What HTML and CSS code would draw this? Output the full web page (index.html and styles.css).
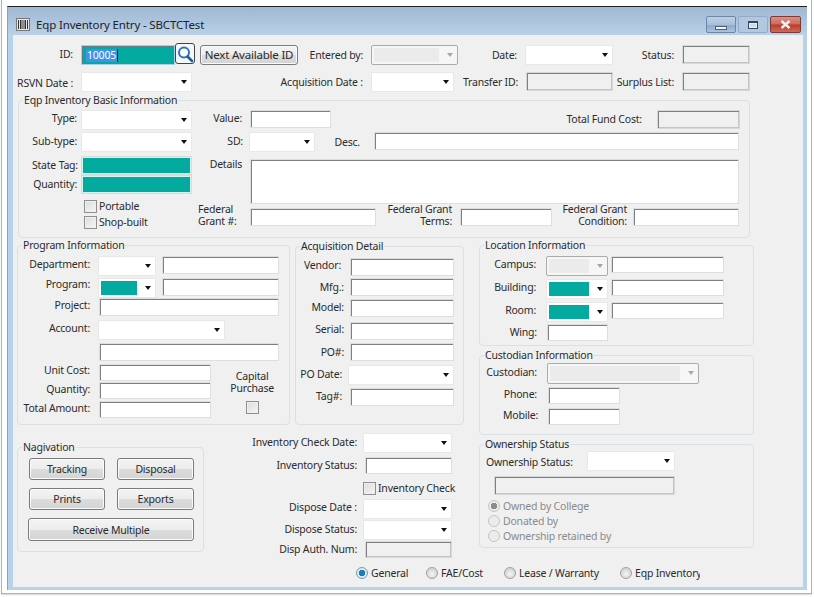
FILE: index.html
```html
<!DOCTYPE html>
<html lang="en">
<head>
<meta charset="utf-8">
<title>Eqp Inventory Entry - SBCTCTest</title>
<link rel="stylesheet" href="styles.css">
</head>
<body>
<div class="sheet">
<div class="window">
  <header class="titlebar">
    <svg class="app-icon" width="14" height="13" viewBox="0 0 14 13"><rect x=".5" y=".5" width="13" height="12" fill="#e8e8e8" stroke="#777"/><path d="M2.5 2v9M4.5 2v9M6 2v9M8 2v9M9.5 2v9M11.5 2v9" stroke="#333" fill="none"/></svg>
    <span class="title">Eqp Inventory Entry - SBCTCTest</span>
    <div class="winbtn min"><i></i></div>
    <div class="winbtn max"><i></i></div>
    <div class="winbtn close"><svg width="13" height="9" viewBox="0 0 13 9"><path d="M2.5 1l8 7M10.5 1l-8 7" stroke="#f4f0ee" stroke-width="2.4" fill="none"/></svg></div>
  </header>
  <main class="content">
    <div class="top t-row1">
      <label class="lbl up1">ID:</label>
      <div class="in id-in"><span class="sel">10005</span></div>
      <button class="search"><svg width="18" height="18" viewBox="0 0 18 18"><circle cx="8" cy="7.5" r="5" fill="#fff" stroke="#2a78b8" stroke-width="2"/><path d="M11.5 11.5l4.5 4.5" stroke="#1f5f99" stroke-width="2.6" stroke-linecap="round"/></svg></button>
      <button class="btn next">Next Available ID</button>
      <label class="lbl">Entered by:</label>
      <div class="combo off"><b></b></div>
      <label class="lbl">Date:</label>
      <div class="combo"></div>
      <label class="lbl">Status:</label>
      <div class="in ro"></div>
    </div>
    <div class="top t-row2">
      <label class="lbl dn1">RSVN Date :</label>
      <div class="combo"></div>
      <label class="lbl">Acquisition Date :</label>
      <div class="combo"></div>
      <label class="lbl">Transfer ID:</label>
      <div class="in ro"></div>
      <label class="lbl">Surplus List:</label>
      <div class="in ro"></div>
    </div>

    <fieldset class="group basic">
      <legend>Eqp Inventory Basic Information</legend>
      <div class="basic-left">
        <label class="lbl p4 h16">Type:</label><div class="combo"></div>
        <label class="lbl p4 h18">Sub-type:</label><div class="combo"></div>
        <label class="lbl p3 h18">State Tag:</label><div class="in teal-in"></div>
        <label class="lbl p4 h18">Quantity:</label><div class="in teal-in"></div>
        <label class="check c2"><span class="box"></span>Portable</label>
        <label class="check c2"><span class="box"></span>Shop-built</label>
      </div>
      <div class="basic-right">
        <div class="r-a">
          <label class="lbl h16">Value:</label><div class="in"></div>
          <label class="lbl p15">Total Fund Cost:</label><div class="in ro"></div>
        </div>
        <div class="r-b">
          <label class="lbl p6 h18">SD:</label><div class="combo"></div>
          <label class="lbl p14">Desc.</label><div class="in"></div>
        </div>
        <div class="r-c">
          <label class="lbl top-lbl">Details</label><div class="in area"></div>
        </div>
        <div class="r-d">
          <label class="lbl two left">Federal<br>Grant #:</label><div class="in"></div>
          <label class="lbl two">Federal Grant<br>Terms:</label><div class="in"></div>
          <label class="lbl two p6">Federal Grant<br>Condition:</label><div class="in"></div>
        </div>
      </div>
    </fieldset>

    <div class="lower">
      <div class="lower-left">
        <div class="lower-top">
          <fieldset class="group program">
            <legend>Program Information</legend>
            <div class="t-dept"><label class="lbl h16">Department:</label><div class="combo"></div><div class="in ml6"></div></div>
            <div class="t-dept t-prog"><label class="lbl h12">Program:</label><div class="combo teal"><b></b></div><div class="in ml6"></div></div>
            <div class="t-project"><label class="lbl h14">Project:</label><div class="in ml1"></div></div>
            <div class="t-account"><label class="lbl h16">Account:</label><div class="combo"></div></div>
            <div class="t-project t-blank"><span></span><div class="in ml1"></div></div>
            <div class="cost">
              <div class="cost-fields">
                <label class="lbl h12">Unit Cost:</label><div class="in ml1"></div>
                <label class="lbl h14">Quantity:</label><div class="in ml1"></div>
                <label class="lbl h14">Total Amount:</label><div class="in ml1"></div>
              </div>
              <div class="capital">
                <span>Capital<br>Purchase</span>
                <span class="box"></span>
              </div>
            </div>
          </fieldset>
          <fieldset class="group acq">
            <legend>Acquisition Detail</legend>
            <label class="lbl p9 h14">Vendor:</label><div class="in"></div>
            <label class="lbl p6">Mfg.:</label><div class="in"></div>
            <label class="lbl p6 h16">Model:</label><div class="in"></div>
            <label class="lbl p6 h14">Serial:</label><div class="in"></div>
            <label class="lbl p6">PO#:</label><div class="in"></div>
            <label class="lbl p8">PO Date:</label><div class="combo mln2"></div>
            <label class="lbl p8 h16">Tag#:</label><div class="in"></div>
          </fieldset>
        </div>
        <div class="lower-bottom">
          <fieldset class="group nav">
            <legend>Nagivation</legend>
            <button class="btn">Tracking</button>
            <button class="btn">Disposal</button>
            <button class="btn">Prints</button>
            <button class="btn">Exports</button>
            <button class="btn receive">Receive Multiple</button>
          </fieldset>
          <div class="inventory">
            <label class="lbl p6">Inventory Check Date:</label><div class="combo w89"></div>
            <label class="lbl p6 h16">Inventory Status:</label><div class="in w87 ml2"></div>
            <span></span><label class="check"><span class="box"></span>Inventory Check</label>
            <label class="lbl p6 h16">Dispose Date :</label><div class="combo w89"></div>
            <label class="lbl p6">Dispose Status:</label><div class="combo w89"></div>
            <label class="lbl p6 h16">Disp Auth. Num:</label><div class="in ro w87 ml2"></div>
          </div>
        </div>
      </div>
      <div class="lower-right">
        <fieldset class="group location">
          <legend>Location Information</legend>
          <label class="lbl p10 h16">Campus:</label><div class="combo off"><b></b></div><div class="in ml3"></div>
          <label class="lbl p10 h16">Building:</label><div class="combo teal"><b></b></div><div class="in ml3"></div>
          <label class="lbl p10 h16">Room:</label><div class="combo teal"><b></b></div><div class="in ml3"></div>
          <label class="lbl p9 h16">Wing:</label><div class="in ml1"></div>
        </fieldset>
        <fieldset class="group custodian">
          <legend>Custodian Information</legend>
          <label class="lbl p10 h18">Custodian:</label><div class="combo off"><b></b></div>
          <label class="lbl p10 h14">Phone:</label><div class="in ml1 w72"></div>
          <label class="lbl p9 h14">Mobile:</label><div class="in ml1 w72"></div>
        </fieldset>
        <fieldset class="group ownership">
          <legend>Ownership Status</legend>
          <div class="own-head"><label class="lbl own-lbl">Ownership Status:</label><div class="combo"></div></div>
          <div class="in ro own-in"></div>
          <label class="radio dim"><span class="dot on"></span>Owned by College</label>
          <label class="radio dim"><span class="dot"></span>Donated by</label>
          <label class="radio dim"><span class="dot"></span>Ownership retained by</label>
        </fieldset>
      </div>
    </div>

    <nav class="tabs">
      <label class="radio"><span class="dot active"></span>General</label>
      <label class="radio"><span class="dot"></span>FAE/Cost</label>
      <label class="radio"><span class="dot"></span>Lease / Warranty</label>
      <label class="radio"><span class="dot"></span>Eqp Inventory</label>
    </nav>
  </main>
</div>
</div>
</body>
</html>
```
FILE: styles.css
```css
* { box-sizing: border-box; }
html, body { margin: 0; padding: 0; background: #fff; }
body { width: 814px; height: 597px; overflow: hidden; font: 10.5px/14px "Noto Sans", sans-serif; letter-spacing: -.2px; color: #2b2b2b; }
.sheet { margin-left: 1px; width: 811px; height: 594px; padding: 6px 4px 0 5px; border: solid #b4b4b4; border-width: 0 1px 1px 1px; box-shadow: 0 1px 1px #ddd; }
.window { width: 800px; height: 584px; background: #b9d2ec; border-top: 1px solid #222; border-left: 1px solid #a0a0a0; padding: 0 4px 3px 5px; display: flex; flex-direction: column; }

.titlebar { height: 28px; margin: 0 -4px 0 -5px; padding: 0 5px 0 8px; display: flex; align-items: flex-start; background: linear-gradient(#9fb7d3, #bad1e8); }
.app-icon { margin-top: 11px; flex: none; }
.title { margin: 9px auto 0 6px; font-size: 11.5px; letter-spacing: -.15px; line-height: 17px; color: #222; }
.winbtn { height: 17px; margin-top: 9px; border: 1px solid #6f87a3; border-radius: 2px; display: flex; align-items: center; justify-content: center; background: linear-gradient(#bcd0e6 0, #a9c0da 50%, #8da8c8 51%, #a9c4e0 100%); }
.winbtn.min { width: 30px; }
.winbtn.min i { width: 12px; height: 4px; margin-top: 6px; background: #eef3f8; border: 1px solid #4b5f78; }
.winbtn.max { width: 30px; margin-left: 2px; background: #b1c8e0; border-color: #94abc6; }
.winbtn.max i { width: 10px; height: 8px; border: 1px solid #39475a; border-top-width: 2px; background: #cfdcea; box-shadow: inset 0 0 0 1px #e6edf5; }
.winbtn.close { width: 31px; margin: 9px 1px 0 2px; border-color: #7d3a35; background: linear-gradient(#d99085 0, #cc6a5d 48%, #b83a2c 52%, #d16a58 100%); }

.content { flex: 1; background: #f0f0f0; padding-top: 10px; }

.lbl { display: block; text-align: right; padding-right: 8px; white-space: nowrap; line-height: 20px; }
.h12.lbl { line-height: 12px; } .h14.lbl { line-height: 14px; } .h16.lbl { line-height: 16px; } .h18.lbl { line-height: 18px; }
.up1.lbl { line-height: 18px; } .dn1.lbl { line-height: 22px; }
.p3 { padding-right: 3px; } .p4 { padding-right: 4px; } .p6 { padding-right: 6px; }
.p8 { padding-right: 8px; } .p9 { padding-right: 9px; } .p10 { padding-right: 10px; }
.p14 { padding-right: 14px; } .p15 { padding-right: 15px; }
.ml1 { margin-left: 1px; } .ml2 { margin-left: 2px; } .ml3 { margin-left: 3px; } .ml6 { margin-left: 6px; }
.mln2 { margin-left: -2px; }
.w72 { width: 72px; } .w87 { width: 87px; } .w89 { width: 89px; }

.in { height: 18px; background: #fff; border: 1px solid #dedede; box-shadow: inset 1px 1px 0 #808080; }
.in.ro { background: #f0f0f0; box-shadow: inset 1px 1px 0 #808080, inset -1px -1px 0 #c4c4c4; border-color: #d8d8d8; height: 19px; }
.in.area { height: 45px; }
.in.teal-in { height: 19px; background: #03aaa0; border: 1px solid #dadada; box-shadow: inset 0 0 0 1px #d8f0ee; }
.id-in { height: 20px; background: #03aaa0; border: 1px solid #a9cfe8; box-shadow: inset 1px 1px 0 #5d7f8a; padding: 3px 0 0 4px; line-height: 13px; color: #fff; }
.sel { display: inline-block; background: #3f93ea; padding: 0 1px; border-right: 1px solid #222; }

.combo { position: relative; height: 20px; background: #fff; border: 1px solid #e8e8e8; border-radius: 1px; }
.combo::after { content: ""; position: absolute; right: 4px; top: 7px; border: solid transparent; border-width: 4px 3.5px 0; border-top-color: #111; }
.combo b { display: block; position: absolute; left: 2px; top: 2px; bottom: 2px; right: 18px; }
.combo.teal b { background: #03aaa0; }
.combo.off { border-color: #ababab; border-radius: 2px; background: #f6f6f6; }
.combo.off b { background: #ebebeb; }
.combo.off::after { border-top-color: #a8a8a8; }

button { font: inherit; letter-spacing: inherit; color: inherit; padding: 0; }
.btn { height: 22px; border: 1px solid #7b7b7b; border-radius: 3px; background: linear-gradient(#f4f4f4 0, #ececec 50%, #dcdcdc 51%, #d4d4d4 100%); box-shadow: inset 0 0 0 1px #fbfbfb; white-space: nowrap; }
.next { height: 20px; width: 98px; font-size: 11.5px; line-height: 16px; }
.search { width: 20px; height: 21px; margin-top: -2px; border: 1px solid #444; border-radius: 3px; background: #f4f7fb; display: flex; align-items: center; justify-content: center; }

.top { display: grid; height: 20px; }
.t-row1 { grid-template-columns: 68px 94px 25px 98px 73px 87px 67px 88px 69px 68px; }
.t-row2 { margin-top: 7px; grid-template-columns: 68px 111px 179px 83px 72px 87px 69px 68px; }

fieldset { margin: 0; padding: 0; min-width: 0; }
.group { border: 1px solid #dbe0e4; border-radius: 4px; }
legend { margin-left: 4px; padding: 0 1px; line-height: 14px; white-space: nowrap; }

.basic { margin: 1px 0 0 5px; width: 732px; height: 145px; display: flex; padding-top: 3px; }
.basic-left { width: 173px; display: grid; grid-template-columns: 62px 111px; grid-template-rows: 22px 24px 19px 24px 16px 16px; }
.basic-right { width: 548px; display: grid; grid-template-rows: 22px 27px 49px 18px; }
.r-a { display: grid; grid-template-columns: 58px 81px 326px 83px; }
.r-b { display: grid; grid-template-columns: 57px 66px 59px 365px; }
.r-c { display: grid; grid-template-columns: 58px 489px; }
.r-d { display: grid; grid-template-columns: 58px 126px 84px 92px 81px 106px; }
.r-a .lbl:not(.h16) { line-height: 18px; }
.lbl.top-lbl { line-height: 10px; }
.lbl.two { line-height: 12px; margin-top: -5px; height: 24px; }
.lbl.two.left { text-align: left; padding-left: 6px; }

.check { display: flex; align-items: center; white-space: nowrap; height: 14px; }
.c2 { grid-column: 2; padding-left: 3px; }
.box { width: 13px; height: 13px; border: 1px solid #8f8f8f; background: linear-gradient(135deg, #dcdcdc, #f6f6f6); box-shadow: inset 0 0 0 1px #efefef; margin-right: 2px; flex: none; }

.lower { display: flex; }
.lower-left { margin-left: 4px; width: 447px; }
.lower-top { display: flex; gap: 5px; }
.program { width: 273px; height: 187px; padding-top: 4px; }
.t-dept { display: grid; grid-template-columns: 80px 58px 123px; height: 22px; }
.t-prog { height: 20px; }
.t-project { display: grid; grid-template-columns: 80px 181px; height: 22px; }
.t-blank { height: 21px; }
.t-account { display: grid; grid-template-columns: 80px 127px; height: 23px; }
.cost { display: flex; }
.cost-fields { width: 194px; display: grid; grid-template-columns: 80px 113px; grid-template-rows: 18px 19px 18px; }
.cost-fields .in { height: 17px; }
.capital { width: 78px; text-align: center; padding-left: 4px; line-height: 12px; padding-top: 6px; display: flex; flex-direction: column; align-items: center; }
.capital .box { margin: 7px 0 0; }
.acq { width: 169px; height: 186px; margin-top: 1px; padding-top: 5px; display: grid; grid-template-columns: 54px 104px; grid-template-rows: 20px 21px 23px 21px 22px 23px 18px; }
.acq .lbl:not(.h14):not(.h16) { line-height: 18px; }
.acq .combo { width: 106px; }

.lower-bottom { display: flex; }
.nav { width: 187px; height: 112px; margin-top: 15px; padding: 4px 0 0 11px; display: grid; grid-template-columns: 76px 77px; grid-template-rows: 22px 22px 23px; gap: 8px 12px; align-content: start; }
.nav legend { margin-left: -7px; }
.receive { grid-column: 1 / 3; margin-left: -1px; height: 23px; }
.inventory { padding-top: 8px; display: grid; grid-template-columns: 159px 101px; grid-template-rows: 24px 24px 18px 21px 21px 17px; }
.inventory .lbl:not(.h16) { line-height: 18px; }
.inventory .in { height: 17px; }

.lower-right { margin-left: 15px; width: 275px; }
.location { height: 108px; padding-top: 4px; display: grid; grid-template-columns: 66px 62px 116px; grid-template-rows: 23px 23px 22px 18px; align-content: start; }
.custodian { height: 87px; margin-top: 2px; padding-top: 1px; display: grid; grid-template-columns: 67px 152px; grid-template-rows: 24px 21px 18px; align-content: start; }
.location .in, .custodian .in { height: 17px; }
.custodian .combo { height: 21px; }
.ownership { height: 111px; margin-top: 2px; }
.own-head { display: flex; height: 25px; }
.own-lbl { width: 107px; text-align: left; padding: 0 0 0 6px; line-height: 22px; }
.own-head .combo { width: 88px; }
.own-in { width: 181px; margin: 0 0 3px 14px; }
.radio { display: flex; align-items: center; height: 15px; white-space: nowrap; overflow: hidden; }
.ownership .radio { padding-left: 8px; }
.dim { color: #8a8a8a; }
.dot { width: 12px; height: 12px; border-radius: 50%; border: 1px solid #a0a0a0; background: radial-gradient(circle at 50% 60%, #f4f4f4, #c8c8c8); margin-right: 3px; flex: none; }
.dim .dot { background: #ececec; border-color: #c4c4c4; }
.dim .dot.on { background: radial-gradient(circle, #8c8c8c 0 3px, #ececec 3.5px); }
.dot.active { background: radial-gradient(circle, #1f7fb4 0 3px, #d8ecf6 3.5px); border-color: #7d9bb0; }

.tabs { margin: 7px 0 0 343px; display: grid; grid-template-columns: 70px 78px 116px 80px; }
```
